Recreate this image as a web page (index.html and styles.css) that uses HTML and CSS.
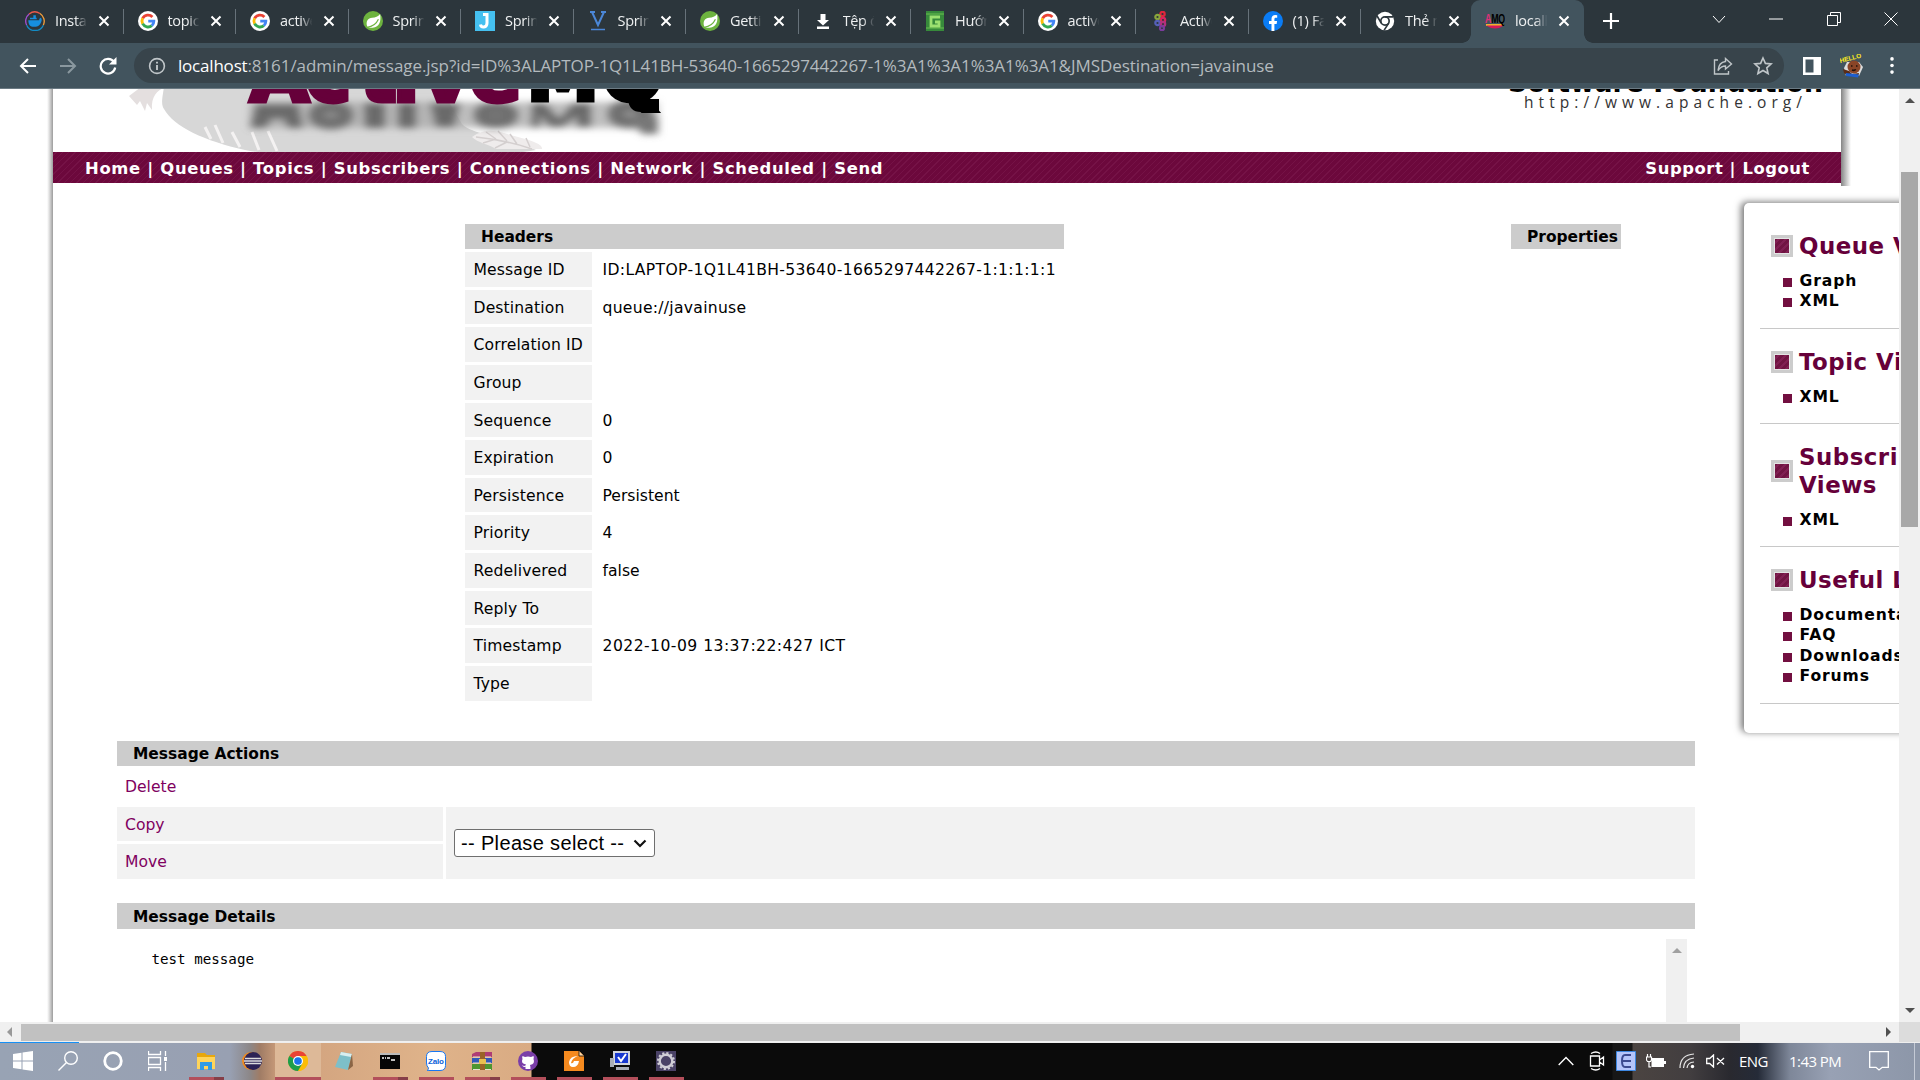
FILE: index.html
```html
<!DOCTYPE html>
<html lang="en">
<head>
<meta charset="utf-8">
<title>localhost : Message</title>
<link rel="stylesheet" href="styles.css">
</head>
<body>
<svg class="sprite" width="0" height="0">
  <symbol id="g" viewBox="0 0 24 24"><circle cx="12" cy="12" r="12" fill="#fff"/><g fill="none" stroke-width="3.4"><path d="M17.3 7.2A7.2 7.2 0 0 0 5.6 8.8" stroke="#ea4335"/><path d="M5.6 8.7a7.2 7.2 0 0 0 0 6.6" stroke="#fbbc05"/><path d="M5.6 15.2a7.2 7.2 0 0 0 11 2.3" stroke="#34a853"/><path d="M16.6 17.5A7 7 0 0 0 19 12.2H12.3" stroke="#4285f4"/></g></symbol>
  <symbol id="leaf" viewBox="0 0 24 24"><circle cx="12" cy="12" r="12" fill="#6db33f"/><path d="M20.5 3.5c1.5 8-.5 16-9 16.500-3 .2-5-.5-6.500-1.500C3 12 6 8.500 11 8c4-.4 7-1 9.500-4.500z" fill="#fff"/><path d="M5 19.500c6-.5 11-4 13.500-9.500" fill="none" stroke="#6db33f" stroke-width="1.400"/></symbol>
  <symbol id="x" viewBox="0 0 12 12"><path d="M1.500 1.500l9 9m0-9l-9 9" stroke="#fff" stroke-width="2" fill="none"/></symbol>
  <symbol id="chrome" viewBox="0 0 24 24"><circle cx="12" cy="12" r="12" fill="#fbbc05"/><path d="M12 12L1.600 6A12 12 0 0 1 22.400 6z" fill="#ea4335"/><path d="M12 6h10.400A12 12 0 0 1 12 24l5-9z" fill="#fbbc05"/><path d="M1.600 6A12 12 0 0 0 12 24l5.200-9L12 12z" fill="#1e9e4a"/><circle cx="12" cy="12" r="6" fill="#fff"/><circle cx="12" cy="12" r="4.600" fill="#1a73e8"/></symbol>
</svg>

<header class="tabs">
  <div class="tab"><svg class="fav" viewBox="0 0 24 24"><g fill="none" stroke-width="1.600"><path d="M2 17A11 11 0 0 1 5 3.500" stroke="#a44fd0"/><path d="M5 3.500A11 11 0 0 1 18 3" stroke="#ee5a4a"/><path d="M18 3a11 11 0 0 1 4 14" stroke="#f3a03d"/><path d="M22 17A11 11 0 0 1 2 17" stroke="#138bc5"/></g><path d="M4 11h13c0-2 1-3 2-3 1 1 1 2 1 3-1 5-4 8-9 8s-7-3-7-8zM6 8h8v2H6zM10 5h3v3h-3z" fill="#168fe0"/></svg><span>Install</span><svg class="x"><use href="#x"/></svg></div>
  <div class="tab"><svg class="fav"><use href="#g"/></svg><span>topic a</span><svg class="x"><use href="#x"/></svg></div>
  <div class="tab"><svg class="fav"><use href="#g"/></svg><span>active</span><svg class="x"><use href="#x"/></svg></div>
  <div class="tab"><svg class="fav"><use href="#leaf"/></svg><span>Spring</span><svg class="x"><use href="#x"/></svg></div>
  <div class="tab"><svg class="fav" viewBox="0 0 20 20"><path d="M0 0h20v20H0z" fill="#45c0f0"/><path d="M8 3.500h5.500M12 4v8c0 5-6 5-6.500 1.500" fill="none" stroke="#fff" stroke-width="3"/></svg><span>Spring</span><svg class="x"><use href="#x"/></svg></div>
  <div class="tab"><svg class="fav" viewBox="0 0 20 20"><path d="M4 1l6 13 6-13M2 1h5M13 1h5" fill="none" stroke="#4b87d8" stroke-width="2"/><path d="M3 18.500h14" stroke="#4b87d8" stroke-width="1.500"/></svg><span>Spring</span><svg class="x"><use href="#x"/></svg></div>
  <div class="tab"><svg class="fav"><use href="#leaf"/></svg><span>Getting</span><svg class="x"><use href="#x"/></svg></div>
  <div class="tab"><svg class="fav" viewBox="0 0 20 20"><path d="M7.500 3h5v6H16l-6 5.500L4 9h3.500zM4 15.500h12V18H4z" fill="#fff"/></svg><span>Tệp đ</span><svg class="x"><use href="#x"/></svg></div>
  <div class="tab"><svg class="fav" viewBox="0 0 20 20"><path d="M1 0h18v20H1z" fill="#378a3b"/><path d="M1 3h18M1 17h18" stroke="#6abf50" stroke-width="1"/><path d="M15 6H6v9h8v-4h-4" fill="none" stroke="#9be070" stroke-width="2.800"/></svg><span>Hướng</span><svg class="x"><use href="#x"/></svg></div>
  <div class="tab"><svg class="fav"><use href="#g"/></svg><span>active</span><svg class="x"><use href="#x"/></svg></div>
  <div class="tab"><svg class="fav" viewBox="0 0 20 20"><g fill="none" stroke-width="2.200"><circle cx="12.500" cy="3" r="2.200" stroke="#e0263c"/><circle cx="7.500" cy="6" r="2.200" stroke="#8aa63b"/><circle cx="13" cy="9" r="2.200" stroke="#d8265e"/><circle cx="7.500" cy="12" r="2.200" stroke="#5560b8"/><circle cx="13" cy="13" r="2.200" stroke="#b3307d"/><circle cx="12" cy="17.200" r="2" stroke="#7b3c9c"/></g></svg><span>Active</span><svg class="x"><use href="#x"/></svg></div>
  <div class="tab"><svg class="fav" viewBox="0 0 20 20"><circle cx="10" cy="10" r="10" fill="#0a7cf5"/><path d="M8.500 20v-7H6v-3h2.500V8c0-2.700 1.500-4 3.800-4l1.900.2v2.500h-1.400c-1 0-1.400.6-1.400 1.400V10h2.700l-.5 3h-2.200v7z" fill="#fff"/></svg><span>(1) Fac</span><svg class="x"><use href="#x"/></svg></div>
  <div class="tab last"><svg class="fav" viewBox="0 0 24 24"><circle cx="12" cy="12" r="11" fill="#fff"/><circle cx="12" cy="12" r="5" fill="none" stroke="#2c363c" stroke-width="2"/><path d="M12 7h10M7.500 14.500L2.500 6M16.500 14.500L11 23" stroke="#2c363c" stroke-width="2"/></svg><span>Thẻ m</span><svg class="x"><use href="#x"/></svg></div>
  <div class="tab active"><svg class="fav" viewBox="0 0 20 20"><path d="M1 13h18v2H1z" fill="#f0b030"/><path d="M1 14.500h18q-9 6-18 0z" fill="#d8185a"/><text x="0" y="12" class="amq" textLength="20" lengthAdjust="spacingAndGlyphs"><tspan fill="#e0307a">A</tspan>MQ</text></svg><span>localh</span><svg class="x"><use href="#x"/></svg></div>
  <svg class="plus" viewBox="0 0 16 16"><path d="M8 0v16M0 8h16" stroke="#fff" stroke-width="2.200"/></svg>
  <div class="win">
    <svg width="14" height="9" viewBox="0 0 14 9"><path d="M1 1l6 6.500L13 1" fill="none" stroke="#fff"/></svg>
    <svg width="14" height="2" viewBox="0 0 14 2"><path d="M0 1h14" stroke="#fff"/></svg>
    <svg width="14" height="14" viewBox="0 0 14 14"><path d="M.5 3.500h10v10H.5zM3.500 3.500v-3h10v10h-3" fill="none" stroke="#fff"/></svg>
    <svg width="14" height="14" viewBox="0 0 14 14"><path d="M.5.5l13 13m0-13l-13 13" fill="none" stroke="#fff"/></svg>
  </div>
</header>

<div class="toolbar">
  <svg class="back" viewBox="0 0 18 16"><path d="M17 8H2m7-7L2 8l7 7" fill="none" stroke="#fff" stroke-width="2"/></svg>
  <svg class="fwd" viewBox="0 0 18 16"><path d="M1 8h15M9 1l7 7-7 7" fill="none" stroke="#8a989f" stroke-width="2"/></svg>
  <svg class="reload" viewBox="0 0 18 18"><path d="M15 5a7.300 7.300 0 1 0 1.200 5.500" fill="none" stroke="#fff" stroke-width="2.200"/><path d="M17.500 0v7.500H10z" fill="#fff"/></svg>
  <div class="omni">
    <svg class="info" viewBox="0 0 18 18"><circle cx="9" cy="9" r="7.400" fill="none" stroke="#c0c6c9" stroke-width="1.600"/><path d="M9 8v5M9 4.800v1.800" stroke="#c0c6c9" stroke-width="1.900"/></svg>
    <div class="url"><b>localhost</b>:8161/admin/message.jsp?id=ID%3ALAPTOP-1Q1L41BH-53640-1665297442267-1%3A1%3A1%3A1%3A1&amp;JMSDestination=javainuse</div>
    <svg class="share" viewBox="0 0 20 18"><path d="M5 3H1.500v14h14v-3M12.500 1.500L18.500 7l-6 5V9C9 9 7 10.500 5 13.500 5.500 8.500 8 5 12.500 4.500z" fill="none" stroke="#c0c6c9" stroke-width="1.400"/></svg>
    <svg class="star" viewBox="0 0 20 20"><path d="M10 2l2.400 5.400 5.800.5-4.400 3.900 1.300 5.700L10 14.500l-5.100 3 1.300-5.700L1.800 7.900l5.800-.5z" fill="none" stroke="#c0c6c9" stroke-width="1.600"/></svg>
  </div>
  <svg class="panel" viewBox="0 0 18 18"><path d="M0 0h18v18H0z" fill="#fff"/><path d="M2.500 2.500h8v13h-8z" fill="#42545e"/></svg>
  <svg class="avatar" viewBox="0 0 24 24"><path d="M4 14l3-6h12l4 5-4 9H6z" fill="#ddd"/><circle cx="14" cy="13" r="6.500" fill="#8a4527"/><path d="M3 15l6 2 3 3 7-1-1 4-9-1-5-3z" fill="#5a2c17"/><path d="M6 19l13 1.500-1 3L6 22z" fill="#1d5fd0"/><path d="M11 12h1.500M16 12h1.500M12 16q2 1 4-.5" stroke="#20100a" stroke-width="1.500"/><text x="0" y="7" class="hello" transform="rotate(-14 8 7)">HELLO</text></svg>
  <svg class="dots" viewBox="0 0 4 18"><g fill="#fff"><circle cx="2" cy="2" r="1.900"/><circle cx="2" cy="9" r="1.900"/><circle cx="2" cy="16" r="1.900"/></g></svg>
</div>

<div class="frame">
  <div class="page">
    <div class="masthead">
      <div class="mast-main">
        <svg class="banner" viewBox="53 89 1788 63" width="1788" height="63">
          <defs><filter id="soft" x="-10%" y="-60%" width="120%" height="220%"><feGaussianBlur stdDeviation="4 3.500"/></filter><filter id="edge"><feGaussianBlur stdDeviation=".7"/></filter></defs>
          <g filter="url(#edge)">
            <path d="M164 87C162 100 161 104 164 109C174 127 205 141 245 150C310 162 450 164 536 150C510 138 470 134 462 124L440 87z" fill="#d7d7d7"/>
            <path d="M129 96l12-9 24 0c-8 4-14 9-13 23l-5-7-2 8-5-10-3 4z" fill="#e4dfdf"/>
            <path d="M211 139l-6-12M223 143l-8-18M240 147l-8-15M259 150l-7-18M277 151l-9-20" stroke="#f4f2f2" stroke-width="3"/>
            <path d="M472 137c16-12 30-4 46 0s25 8 24 12h-46c-8-5-18-6-24-12z" fill="#efecec"/>
            <path d="M476 137q30 3 56 12M486 132l10 7M498 131l9 10M510 134l7 10M483 143l13-4M495 148l12-6M526 138l4 9" stroke="#d4cfcf" fill="none" stroke-width="1.500"/>
          </g>
          <g filter="url(#soft)">
            <path d="M250 102h408v26H250z" fill="#aaa" opacity=".75"/>
            <path d="M256 104h42l5 24h-15l-4-9h-13l-5 9h-16zM364 103h21v25h-20zM398 103h18v25h-18zM430 103h30l-6 24h-18zM532 103h13l14 16 14-16h18v24h-14v-11l-15 11h-12l-10-12v12h-9z" fill="#6a6a6a"/>
            <g fill="none" stroke="#707070" stroke-width="13"><ellipse cx="331" cy="115" rx="16" ry="8"/><ellipse cx="496" cy="115" rx="16" ry="7"/><ellipse cx="630" cy="114" rx="16" ry="8"/></g>
            <path d="M628 116h30v18h-16z" fill="#777"/>
          </g>
          <g class="logo"><text x="250 306 360 393 421 470" y="101" font-size="76" fill="#66003a" stroke="#66003a" stroke-width="5">Active</text>
          <text x="527 602" y="100" font-size="72" stroke="#000" stroke-width="5">MQ</text></g>
          <path d="M628 99h31v13h-18q-12 0-13-13z"/>
          <text x="1508" y="92" class="asf" textLength="315" lengthAdjust="spacingAndGlyphs">Software Foundation</text>
          <text x="1524" y="108" class="asf-url" textLength="278">http://www.apache.org/</text>
        </svg>
        <nav class="nav"><div class="nav-l">Home | Queues | Topics | Subscribers | Connections | Network | Scheduled | Send</div><div class="nav-r">Support | Logout</div></nav>
      </div>
      <div class="mast-shadow"></div>
    </div>

    <div class="body">
      <main>
        <div class="top">
          <section class="headers">
            <h2>Headers</h2>
            <div class="row"><b>Message ID</b><span class="id">ID:LAPTOP-1Q1L41BH-53640-1665297442267-1:1:1:1:1</span></div>
            <div class="row"><b>Destination</b><span class="dest">queue://javainuse</span></div>
            <div class="row"><b>Correlation ID</b><span></span></div>
            <div class="row"><b>Group</b><span></span></div>
            <div class="row"><b>Sequence</b><span>0</span></div>
            <div class="row"><b>Expiration</b><span>0</span></div>
            <div class="row"><b>Persistence</b><span>Persistent</span></div>
            <div class="row"><b>Priority</b><span>4</span></div>
            <div class="row"><b>Redelivered</b><span>false</span></div>
            <div class="row"><b>Reply To</b><span></span></div>
            <div class="row"><b>Timestamp</b><span class="stamp">2022-10-09 13:37:22:427 ICT</span></div>
            <div class="row"><b>Type</b><span></span></div>
          </section>
          <section class="props"><h2>Properties</h2></section>
        </div>
        <section class="actions">
          <h2>Message Actions</h2>
          <div class="grid">
            <a class="plain">Delete</a>
            <a class="cell">Copy</a>
            <a class="cell">Move</a>
            <div class="pick"><div class="select">-- Please select --<svg width="14" height="9" viewBox="0 0 14 9"><path d="M1.500 1.500L7 7l5.500-5.500" fill="none" stroke="#111" stroke-width="2.200"/></svg></div></div>
          </div>
        </section>
        <section class="details">
          <h2>Message Details</h2>
          <div class="message"><pre>test message</pre><div class="inner-bar"><i class="up dim"></i></div></div>
        </section>
      </main>

      <aside>
        <div class="group g1"><h3><i></i>Queue Views</h3><ul><li>Graph</li><li>XML</li></ul></div>
        <div class="group g2"><h3><i></i>Topic Views</h3><ul><li>XML</li></ul></div>
        <div class="group g3"><h3><i></i>Subscribers<br>Views</h3><ul><li>XML</li></ul></div>
        <div class="group g4"><h3><i></i>Useful Links</h3><ul><li>Documentation</li><li>FAQ</li><li>Downloads</li><li>Forums</li></ul></div>
      </aside>
    </div>
  </div>
  <div class="vbar"><i class="up"></i><div class="vthumb"></div><i class="down"></i></div>
  <div class="hbar"><i class="left"></i><div class="hthumb"></div><i class="right"></i></div>
  <div class="corner"></div>
</div>
<div class="sliver"></div>

<footer class="taskbar">
  <div class="t"><svg viewBox="0 0 20 20"><path d="M0 3l8.500-1.200v7.700H0zM9.500 1.600L20 0v9.500H9.500zM0 10.500h8.500v7.700L0 17zM9.500 10.500H20V20L9.500 18.400z" fill="#fff"/></svg></div>
  <div class="t"><svg viewBox="0 0 20 20"><circle cx="13" cy="7" r="6.300" fill="none" stroke="#fff" stroke-width="1.400"/><path d="M8.500 11.500L.5 19.500" stroke="#fff" stroke-width="1.400"/></svg></div>
  <div class="t"><svg viewBox="0 0 20 20"><circle cx="10" cy="10" r="8.300" fill="none" stroke="#fff" stroke-width="2.800"/></svg></div>
  <div class="t"><svg viewBox="0 0 20 20"><path d="M.5 0v3.500h12V0M.5 20v-3.500h12V20M.5 6.500h12v7H.5zM17.500 0v5M17.500 11v9" fill="none" stroke="#fff" stroke-width="1.300"/><path d="M16 6h3v4h-3z" fill="#fff"/></svg></div>
  <div class="t run two first"><svg viewBox="0 0 20 20"><path d="M1 2h8l2 2h8v14H1z" fill="#e8a70c"/><path d="M1 6h18v12H1z" fill="#ffd45a"/><path d="M4 19v-8h12v8h-4v-4H8v4z" fill="#2e9be6"/></svg></div>
  <div class="t"><svg viewBox="0 0 20 20"><circle cx="9" cy="10" r="9" fill="#f08c1f"/><circle cx="11" cy="10" r="9" fill="#2c2255"/><path d="M3 7.500h16M2 10h18M3 12.500h16" stroke="#ddd" stroke-width="1.400"/></svg></div>
  <div class="t run current"><svg><use href="#chrome"/></svg></div>
  <div class="t"><svg viewBox="0 0 20 20"><path d="M7 1l11 2-4 16-13-3z" fill="#7dbfc9"/><path d="M7 1l11 2-1 3L6 4z" fill="#d9eef0"/><path d="M18 3l1 12-5 4z" fill="#8b6545"/></svg></div>
  <div class="t run two"><svg viewBox="0 0 20 20"><path d="M0 2h20v16H0z" fill="#060606"/><path d="M0 2h20v2H0z" fill="#bbb"/><path d="M2 7h2M5 7h1M7 7h3M11 9h4" stroke="#fff" stroke-width="1.400"/></svg></div>
  <div class="t run"><svg viewBox="0 0 20 20"><path d="M6 .5h8q5.500 0 5.500 5v9q0 5-5.500 5H3l-1.500.5 1-3Q.5 15 .5 12V5.500q0-5 5.500-5z" fill="#fff" stroke="#1877f2"/><text x="2" y="13" class="zalo" textLength="16">Zalo</text></svg></div>
  <div class="t run two"><svg viewBox="0 0 20 20"><path d="M0 3l4-2h16v5H0z" fill="#ae3c75"/><path d="M0 7h20v5H0z" fill="#3159b8"/><path d="M0 13h20v6H0z" fill="#4e962f"/><path d="M1 6h18M1 12h18M1 18.500h18" stroke="#e8e0d0"/><path d="M8 1h5v18H8z" fill="#9a6428"/><path d="M7 8h7v5H7z" fill="#e8c050"/></svg></div>
  <div class="t run"><svg viewBox="0 0 20 20"><circle cx="10" cy="10" r="10" fill="#7a3ea8"/><path d="M4.500 5l2.500 1q3-1 6 0l2.500-1q.6 1.500 0 3 2 5-3.500 6 .5 1 .5 4h-5v-2.200Q5 16.500 4 14q2 1.500 3.500.5l.5-1Q2.500 12.500 4.500 8q-.6-1.500 0-3z" fill="#fff"/></svg></div>
  <div class="t run"><svg viewBox="0 0 20 20"><path d="M0 0h15l5 5v15H0z" fill="#f58a1f"/><path d="M15 0v5h5" fill="#ffd6a2" stroke="#111" stroke-width=".8"/><path d="M14 5q-8 0-9 6 0 5 4 5 5 0 6-6h-5q-1 3-3 2 1-5 7-7z" fill="#fff"/></svg></div>
  <div class="t run"><svg viewBox="0 0 20 20"><path d="M3 0h17v14H3z" fill="#cfd3dd"/><path d="M5 2h13v10H5z" fill="#1738d0"/><path d="M8 6l3 4 5-7" fill="none" stroke="#fff" stroke-width="2"/><path d="M0 7h4v9H0zM6 16h13v3H6z" fill="#a8adb8"/></svg></div>
  <div class="t run"><svg viewBox="0 0 20 20"><path d="M0 0h20v20H0z" fill="#4a4266"/><circle cx="10" cy="10" r="6.300" fill="none" stroke="#d0ced6" stroke-width="2.400"/><circle cx="10" cy="10" r="8" fill="none" stroke="#d0ced6" stroke-width="2" stroke-dasharray="2.200 2"/></svg></div>

  <div class="tray">
    <svg class="chev" viewBox="0 0 16 10"><path d="M.7 9L8 1.500 15.300 9" fill="none" stroke="#fff" stroke-width="1.400"/></svg>
    <svg class="meet" viewBox="0 0 16 20"><path d="M1.500 5h9v10h-9zM10.500 9l4-3v8l-4-3M2 2.500q5-3 9 0M2 17.500q5 3 9 0" fill="none" stroke="#fff" stroke-width="1.300"/></svg>
    <svg class="uni" viewBox="0 0 20 20"><path d="M.5.500h19v19H.500z" fill="#b5c5fa" stroke="#3d87e0"/><path d="M15 4H9Q6 4 6 10t3 6h6M6 10h9" fill="none" stroke="#3c4a90" stroke-width="2"/></svg>
    <svg class="batt" viewBox="0 0 20 14"><path d="M5.500 4h12.500v9H5.500zM18 7h2v3h-2z" fill="#fff"/><path d="M.5 3h5v3l-1 1.500h-3L.5 6zM1.500 0v3M4.500 0v3M3 7v6h2" fill="none" stroke="#fff" stroke-width="1.200"/></svg>
    <svg class="wifi" viewBox="0 0 16 16"><path d="M1 15Q1 2 15 1M4.500 15Q5 6 15 5M8 15q.5-5.500 7-6" fill="none" stroke="#e6e6e6" stroke-width="1.200"/><circle cx="13.500" cy="13.500" r="1.700" fill="#fff"/></svg>
    <svg class="vol" viewBox="0 0 19 14"><path d="M.7 4.500h3L7.500 1v12L3.700 9.500h-3zM11 4l7 6.500m0-6.500l-7 6.500" fill="none" stroke="#fff" stroke-width="1.300"/></svg>
    <span class="eng">ENG</span>
    <span class="time">1:43 PM</span>
    <svg class="note" viewBox="0 0 20 20"><path d="M.7.700h18.600v15.600h-6L10 19l-3-2.700H.7z" fill="none" stroke="#fff" stroke-width="1.300"/></svg>
  </div>
</footer>
</body>
</html>
```
FILE: styles.css
```css
* { box-sizing: border-box; }
body { margin: 0; width: 1920px; height: 1080px; overflow: hidden; display: flex; flex-direction: column; background: #fff; font-family: "DejaVu Sans", sans-serif; font-size: 15.6px; color: #000; }
h2, h3, ul, pre { margin: 0; padding: 0; }
svg { display: block; flex: none; }
.sprite { position: absolute; }

/* Tab strip */
.tabs { height: 43px; flex: none; background: #2c363c; display: flex; align-items: flex-start; padding-left: 11px; font-family: "Open Sans", "Noto Sans", sans-serif; font-size: 14.5px; letter-spacing: -.3px; color: #eef0f1; }
.tab { width: 112.5px; height: 43px; flex: none; display: flex; align-items: center; padding: 0 14px 2px; position: relative; white-space: nowrap; }
.tab:not(.last):not(.active)::after { content: ""; position: absolute; right: 0; top: 9px; width: 1px; height: 25px; background: #67727a; }
.tab span { width: 34px; margin-left: 10px; overflow: hidden; -webkit-mask-image: linear-gradient(90deg, #000 60%, transparent 95%); mask-image: linear-gradient(90deg, #000 60%, transparent 95%); }
.fav { width: 20px; height: 20px; }
.x { width: 12px; height: 12px; margin-left: 9px; }
.tab.active { margin-left: -2.500px; background: #42545e; border-radius: 9px 9px 0 0; }
.tab.active::before { content: ""; position: absolute; left: -9px; right: -9px; bottom: 0; height: 9px; background: radial-gradient(circle at 0 0, transparent 8.500px, #42545e 9px) left / 9px 9px no-repeat, radial-gradient(circle at 9px 0, transparent 8.500px, #42545e 9px) right / 9px 9px no-repeat; }
.amq { font: bold 13px "Liberation Sans", sans-serif; }
.plus { width: 16px; height: 16px; margin: 13px 0 0 19px; }
.win { flex: 1; display: flex; justify-content: space-between; align-items: center; height: 38px; padding: 0 22px 0 93px; }

/* Toolbar */
.toolbar { height: 46px; flex: none; background: #42545e; border-bottom: 1px solid #6b7a83; display: flex; align-items: center; padding-left: 19px; }
.back, .fwd { width: 18px; height: 16px; }
.fwd { margin-left: 22px; }
.reload { width: 18px; height: 18px; margin-left: 22px; }
.omni { width: 1650px; height: 35px; margin-left: 17px; border-radius: 18px; background: #38444b; display: flex; align-items: center; }
.info { width: 18px; height: 18px; margin-left: 14px; }
.url { width: 1120px; margin-left: 12px; font-family: "Open Sans", sans-serif; font-size: 17px; letter-spacing: -.07px; color: #b3babe; white-space: nowrap; }
.url b { font-weight: 400; color: #fff; letter-spacing: -.2px; }
.share { width: 20px; height: 18px; margin-left: 415px; }
.star { width: 20px; height: 20px; margin-left: 20px; }
.panel { width: 18px; height: 18px; margin-left: 19px; }
.avatar { width: 24px; height: 24px; margin-left: 19px; }
.hello { font: bold 6.500px "Liberation Sans", sans-serif; fill: #ffec20; }
.dots { width: 4px; height: 17px; margin-left: 26px; }

/* Page frame and scrollbars */
.frame { height: 953px; flex: none; display: grid; grid-template: 933px 20px / 1899px 21px; }
.page { overflow: hidden; padding-left: 53px; background: linear-gradient(90deg, #fff 47px, #e4e4e4 49px, #9c9c9c 53px, #fff 53px); }
.vbar, .hbar { background: #f0f0f0; display: flex; align-items: center; }
.vbar { flex-direction: column; padding: 9px 0 9px; }
.vthumb { width: 17px; height: 355px; margin: 69px 0 auto; background: #a8a8a8; }
.hbar { padding: 0 8px 0 7px; }
.hthumb { width: 1719px; height: 17px; margin: 0 auto 0 9px; background: #c1c1c1; }
.corner { background: #dcdcdc; }
.up, .down, .left, .right { border: 5px solid transparent; flex: none; }
.up { border-bottom-color: #505050; border-top: 0; }
.down { border-top-color: #505050; border-bottom: 0; }
.left { border-right-color: #999; border-left: 0; }
.right { border-left-color: #505050; border-right: 0; }
.up.dim { border-bottom-color: #a0a0a0; }

/* Masthead */
.masthead { display: flex; height: 97px; }
.mast-main { width: 1788px; }
.mast-shadow { width: 10px; background: linear-gradient(90deg, #858585, #fff); }
.logo { font-family: "DejaVu Sans", sans-serif; font-weight: bold; }
.asf { font: bold 30px "DejaVu Sans", sans-serif; }
.asf-url { font: 15.500px "Open Sans", sans-serif; fill: #333; }
.nav { height: 31px; padding: 2px 31px 0 32px; display: flex; justify-content: space-between; align-items: center; background: repeating-linear-gradient(135deg, #6c083c 0 2px, #751246 2px 3px, #6c083c 3px 4.500px); color: #fff; font-weight: bold; font-size: 16.400px; letter-spacing: .68px; white-space: nowrap; }
.nav-r { letter-spacing: .56px; }

/* Content */
.body { display: flex; padding-left: 64px; }
main { width: 1578px; flex: none; padding-top: 38px; }
h2 { height: 25px; background: #ccc; padding-left: 16px; font-size: 15.450px; line-height: 27px; }
.top { display: flex; height: 476px; }
.headers { margin-left: 348px; width: 599px; }
.row { display: grid; grid-template: 34.640px / 127px 1fr; margin-top: 3px; white-space: nowrap; line-height: 37px; }
.row b { font-weight: 400; background: #f2f2f2; padding-left: 8.500px; letter-spacing: .13px; }
.row span { padding-left: 10.500px; }
.row .id { letter-spacing: .35px; }
.row .dest { letter-spacing: .28px; }
.row .stamp { letter-spacing: .46px; }
.props { margin-left: 447px; width: 110px; }
.actions { margin-top: 41px; }
.grid { display: grid; grid-template: 35px 34px 35px / 326px 1fr; gap: 3px; margin-top: 3px; color: #800060; line-height: 37px; }
.grid a { padding-left: 8px; }
.plain { grid-column: 1 / 3; }
.cell { grid-column: 1; background: #f2f2f2; }
.pick { grid-column: 2; grid-row: 2 / 4; background: #f2f2f2; display: flex; align-items: center; padding-left: 8px; }
.select { width: 201px; height: 28px; border: 1px solid #6f6f6f; border-radius: 3px; background: #fff; color: #000; display: flex; align-items: center; justify-content: space-between; padding: 0 7px 0 6px; font-family: "Liberation Sans", sans-serif; font-size: 20px; letter-spacing: .35px; white-space: nowrap; }
.details { margin-top: 24px; }
.details h2 { height: 26px; line-height: 28px; }
.message { display: flex; justify-content: space-between; padding: 10px 8px 0 35px; }
pre { font: 14.200px/20px "DejaVu Sans Mono", monospace; padding-top: 10px; margin-left: -.5px; }
.inner-bar { width: 21px; height: 83px; background: #f0f0f0; display: flex; justify-content: center; align-items: flex-start; padding-top: 9px; }

/* Sidebar */
aside { width: 260px; height: 530px; flex: none; margin: 17px 0 0 49px; padding-left: 16px; background: #fff; border-radius: 5px; box-shadow: -3px -1px 7px #777; font-weight: bold; letter-spacing: .9px; }
.group { border-bottom: 1px solid #c8c8c8; }
.g1 { height: 126px; padding-top: 29px; }
.g2 { height: 95px; padding-top: 19px; }
.g3 { height: 123px; padding-top: 19px; }
.g4 { height: 157px; padding-top: 19px; }
h3 { display: flex; align-items: center; margin-left: 11px; font-size: 22.900px; letter-spacing: .5px; line-height: 28px; color: #66003a; white-space: nowrap; }
h3 i { width: 22px; height: 22px; margin-right: 6px; border: 3px solid #ccc; background: repeating-linear-gradient(135deg, #701442 0 3px, #801f52 3px 5px); box-shadow: inset 0 0 0 1px #e4e4e4; }
ul { list-style: none; margin: 11px 0 0 23px; line-height: 20.400px; }
li { display: flex; align-items: center; }
li::before { content: ""; width: 9px; height: 9px; margin: 2px 7.500px 0 0; background: #720f40; }

/* Taskbar */
.sliver { height: 1px; flex: none; background: linear-gradient(90deg, #1690f5 79px, #eee 79px); }
.taskbar { height: 37px; flex: none; display: flex; background: linear-gradient(90deg, #98a3b4 0, #98a0b2 230px, #8c8788 250px, #a07c65 260px, #d0a17d 280px, #dfb38a 430px, #d9ab83 531px, #0b0b0b 532px, #0b0b0b 1612px, #171717 1613px, #171717 1632px, #4b4441 1633px, #423e40 1690px, #29292f 1730px, #252b38 1758px, #7e8799 1790px, #98a1b4 1830px, #8d97a9 1914px, #c4cad5 1914px, #c4cad5 1915px, #8d97a9 1915px); }
.t { width: 46px; height: 37px; flex: none; display: flex; justify-content: center; align-items: center; padding-bottom: 1px; position: relative; }
.t:nth-child(-n+4) { width: 45px; }
.t.first { margin-left: 3px; }
.t svg { width: 20px; height: 20px; }
.t.run::after { content: ""; position: absolute; left: 6px; right: 5px; bottom: 0; height: 3px; background: #b34f5b; }
.t.two::after { background: linear-gradient(90deg, #b34f5b 70%, #863e48 70%); }
.t.current { background: #ddb998; }
.t.current::after { left: 0; right: 0; }
.zalo { font: bold 8px "Liberation Sans", sans-serif; fill: #0c62d8; }
.tray { display: flex; align-items: center; margin-left: auto; padding: 0 31px 1px 0; color: #fff; font-family: "Open Sans", sans-serif; font-size: 15px; letter-spacing: -.55px; white-space: nowrap; }
.chev { width: 16px; height: 10px; }
.meet { width: 16px; height: 20px; margin-left: 15px; }
.uni { width: 20px; height: 20px; margin-left: 11px; }
.batt { width: 20px; height: 14px; margin-left: 10px; }
.wifi { width: 16px; height: 16px; margin-left: 13px; }
.vol { width: 19px; height: 14px; margin-left: 11px; }
.eng { width: 29px; margin-left: 14px; }
.time { width: 51px; margin-left: 21px; }
.note { width: 20px; height: 20px; margin-left: 29px; }
```
